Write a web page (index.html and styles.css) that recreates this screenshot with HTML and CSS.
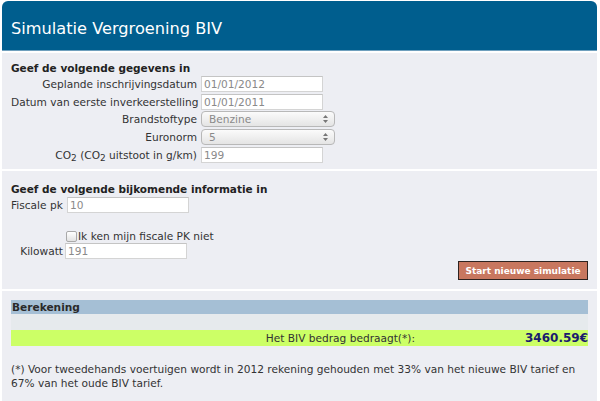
FILE: index.html
```html
<!DOCTYPE html>
<html lang="nl">
<head>
<meta charset="utf-8">
<title>Simulatie Vergroening BIV</title>
<link rel="stylesheet" href="styles.css">
</head>
<body>
<div class="panel">
  <div class="header"><h1 class="title">Simulatie Vergroening BIV</h1></div>

  <section class="sec sec-data">
    <h2 class="sec-title">Geef de volgende gegevens in</h2>
    <div class="form-grid">
      <label class="lbl">Geplande inschrijvingsdatum</label>
      <input class="txt" type="text" value="01/01/2012">
      <label class="lbl">Datum van eerste inverkeerstelling</label>
      <input class="txt" type="text" value="01/01/2011">
      <label class="lbl">Brandstoftype</label>
      <div class="sel-wrap">
        <select class="sel"><option>Benzine</option></select>
        <svg class="sel-arrows" width="7" height="10" viewBox="0 0 7 10"><path d="M1 4 L3.5 1 L6 4 Z M1 6 L3.5 9 L6 6 Z" fill="#777"/></svg>
      </div>
      <label class="lbl">Euronorm</label>
      <div class="sel-wrap">
        <select class="sel"><option>5</option></select>
        <svg class="sel-arrows" width="7" height="10" viewBox="0 0 7 10"><path d="M1 4 L3.5 1 L6 4 Z M1 6 L3.5 9 L6 6 Z" fill="#777"/></svg>
      </div>
      <label class="lbl">CO<sub class="sub">2</sub> (CO<sub class="sub">2</sub> uitstoot in g/km)</label>
      <input class="txt" type="text" value="199">
    </div>
  </section>

  <section class="sec sec-extra">
    <h2 class="sec-title">Geef de volgende bijkomende informatie in</h2>
    <div class="row row-pk">
      <label class="lbl">Fiscale pk</label>
      <input class="txt" type="text" value="10">
    </div>
    <div class="row row-check">
      <input class="chk" type="checkbox" id="nopk">
      <label class="lbl" for="nopk">Ik ken mijn fiscale PK niet</label>
    </div>
    <div class="row row-kw">
      <label class="lbl">Kilowatt</label>
      <input class="txt" type="text" value="191">
    </div>
    <div class="btn-row">
      <button class="btn" type="button">Start nieuwe simulatie</button>
    </div>
  </section>

  <section class="sec sec-result">
    <div class="res-head">Berekening</div>
    <div class="res-blank"></div>
    <div class="res-line">
      <span class="res-label">Het BIV bedrag bedraagt(*):</span>
      <span class="res-amount">3460.59€</span>
    </div>
    <p class="note">(*) Voor tweedehands voertuigen wordt in 2012 rekening gehouden met 33% van het nieuwe BIV tarief en 67% van het oude BIV tarief.</p>
  </section>
</div>
</body>
</html>
```

FILE: styles.css
```css
* { box-sizing: border-box; }

html, body {
  margin: 0;
  padding: 0;
  background: #ffffff;
}

body {
  font-family: "DejaVu Sans", Verdana, sans-serif;
  font-size: 10.6px;
  color: #333333;
}

.panel {
  width: 595px;
  margin: 1px 0 0 2px;
  display: flex;
  flex-direction: column;
  gap: 2px;
}

.header {
  background: #005e8e;
  height: 50px;
  border-radius: 6px 6px 0 0;
  display: flex;
  align-items: center;
  padding: 5px 0 0 9px;
  border-bottom: 1px solid #6f9fbd;
}

.title {
  margin: 0;
  font-family: "DejaVu Sans", "Lucida Grande", sans-serif;
  font-weight: normal;
  font-size: 16.2px;
  color: #ffffff;
}

.sec {
  background: #edeef3;
  padding: 0 9px;
}

.sec-title {
  margin: 0;
  font-size: 10.5px;
  font-weight: bold;
  line-height: 14px;
  color: #222222;
}

.sec-data {
  height: 116px;
  padding-top: 8px;
}

.form-grid {
  display: grid;
  grid-template-columns: 186px auto;
  column-gap: 4px;
  grid-auto-rows: 16px;
  row-gap: 1.7px;
  align-items: center;
  margin-top: 1px;
}

.lbl {
  text-align: right;
  white-space: nowrap;
  line-height: 16px;
  color: #333333;
}

.sub {
  font-size: 9px;
  vertical-align: -2px;
  line-height: 0;
}

.txt {
  width: 122px;
  height: 16px;
  border: 1px solid #d4d4d4;
  border-top-color: #c4c4c4;
  background: #ffffff;
  font-family: "DejaVu Sans", Verdana, sans-serif;
  font-size: 10.6px;
  color: #8a8a8a;
  padding: 0 2px;
  margin: 0;
  outline: none;
}

.sel-wrap {
  position: relative;
  width: 134px;
  height: 16px;
}

.sel {
  appearance: none;
  -webkit-appearance: none;
  width: 134px;
  height: 16px;
  border: 1px solid #b8b8b8;
  border-radius: 4px;
  background: linear-gradient(#fbfbfb, #e4e4e4);
  font-family: "DejaVu Sans", Verdana, sans-serif;
  font-size: 10.6px;
  color: #8a8a8a;
  padding: 0 0 0 7px;
  margin: 0;
  line-height: 14px;
}

.sel-arrows {
  position: absolute;
  right: 6px;
  top: 3px;
  pointer-events: none;
}

.sec-extra {
  height: 118px;
  padding-top: 11px;
  display: flex;
  flex-direction: column;
}

.row {
  display: flex;
  align-items: center;
  gap: 2px;
}

.row-pk {
  margin-top: 1px;
}

.row-pk .lbl { width: 54px; text-align: left; }

.row-check {
  margin-top: 16px;
  padding-left: 55px;
  gap: 0;
  height: 14px;
}

.chk {
  appearance: none;
  -webkit-appearance: none;
  width: 11px;
  height: 11px;
  margin: 0 1px 0 0;
  border: 1px solid #a9a9a9;
  border-radius: 2px;
  background: linear-gradient(#ffffff, #e2e2e2);
}

.row-check .lbl { text-align: left; }

.row-kw .lbl { width: 52px; }

.btn-row {
  display: flex;
  justify-content: flex-end;
  margin-top: 2px;
}

.btn {
  background: #c8775f;
  border: 1px solid #2e2320;
  color: #ffffff;
  font-family: "DejaVu Sans", Verdana, sans-serif;
  font-weight: bold;
  font-size: 9px;
  height: 19px;
  width: 130px;
  padding: 0;
  margin: 0;
  white-space: nowrap;
}

.sec-result {
  padding-top: 9px;
  padding-bottom: 10px;
  min-height: 110px;
}

.res-head {
  background: #a5bfd5;
  height: 14px;
  line-height: 14px;
  font-weight: bold;
  color: #2a2a2a;
  padding-left: 1px;
}

.res-blank {
  background: #e6eaed;
  height: 16px;
}

.res-line {
  background: #ccff66;
  height: 16px;
  display: flex;
  align-items: center;
  color: #333333;
}

.res-label {
  width: 404px;
  text-align: right;
}

.res-amount {
  flex: 1;
  text-align: right;
  font-weight: bold;
  font-size: 12px;
  color: #1b1b6e;
}

.note {
  margin: 16px 0 0 0;
  line-height: 14px;
  color: #333333;
}
```
